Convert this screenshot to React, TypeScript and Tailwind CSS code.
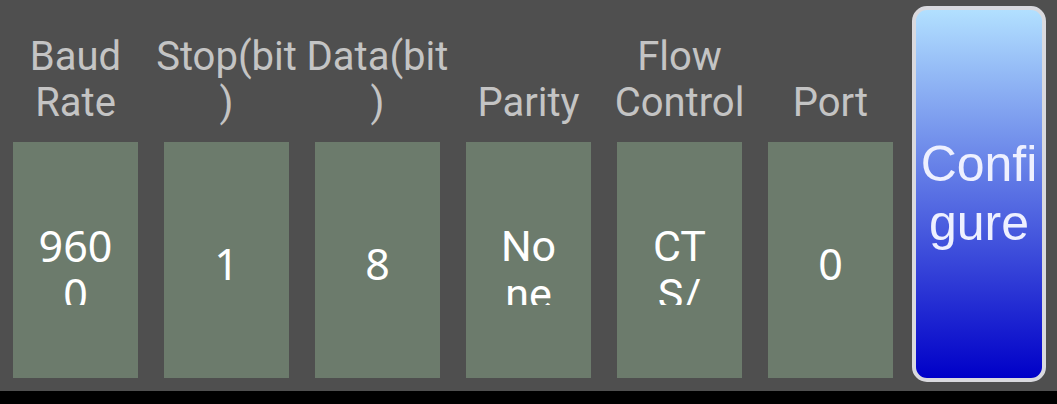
const columns = [
  { label: "Baud Rate", value: "9600", digits: true },
  { label: "Stop(bit)", value: "1", digits: true },
  { label: "Data(bit)", value: "8", digits: true },
  { label: "Parity", value: "None", digits: false },
  // zero-width space lets the slash break the way the device does
  { label: "Flow Control", value: "CTS/\u200BRTS", digits: false },
  { label: "Port", value: "0", digits: true },
];

export default function App() {
  return (
    <div className="w-[1057px] h-[404px] bg-black">
      <div className="flex h-[391px] bg-[#4f4f4f]">
        {columns.map((col) => (
          <div key={col.label} className="w-[151px] shrink-0 flex flex-col pt-[34px]">
            {/* label sits on the bottom of its area */}
            <div className="h-[92px] flex items-end justify-center">
              <div className="w-[151px] text-center [overflow-wrap:anywhere] text-[40px] leading-[46px] text-[#c4c4c4] font-['Roboto',sans-serif]">
                {col.label}
              </div>
            </div>
            <div className="mt-[16px] mx-[13px] h-[236px] bg-[#6c7b6c] flex flex-col items-center">
              <div className="mt-[80px] h-[83px] w-[77px] overflow-hidden flex flex-col [justify-content:safe_center]">
                <div
                  className={
                    "text-center [overflow-wrap:anywhere] text-[43px] leading-[48px] text-white " +
                    (col.digits ? "font-['Noto_Sans',sans-serif]" : "font-['Roboto',sans-serif]")
                  }
                >
                  {col.value}
                </div>
              </div>
            </div>
          </div>
        ))}

        <button className="ml-[6px] mt-[6px] w-[134px] h-[376px] shrink-0 rounded-[15px] border-[4px] border-[#d9d9de] bg-linear-to-b/srgb from-[#b2e0ff] to-[#0000c8] flex items-center justify-center px-[4px]">
          <span className="text-center break-all text-[50px] leading-[59px] text-[#eef0ff] font-['Liberation_Sans',Arial,sans-serif]">
            Configure
          </span>
        </button>
      </div>
    </div>
  );
}
